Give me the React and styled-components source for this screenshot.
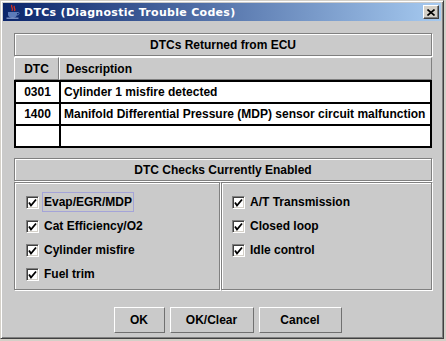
import React from 'react';
import styled, { createGlobalStyle } from 'styled-components';

const GlobalStyle = createGlobalStyle`
  html, body {
    margin: 0;
    padding: 0;
    background: #d4d0c8;
  }
  body {
    font-family: "Liberation Sans", Arial, sans-serif;
    font-size: 12px;
    font-weight: bold;
    color: #000;
  }
`;

const Window = styled.div`
  width: 444px;
  height: 339px;
  box-sizing: border-box;
  border: 1px solid;
  border-color: #d4d0c8 #404040 #404040 #d4d0c8;
  box-shadow: inset 1px 1px #fff, inset -1px -1px #808080;
  padding: 2px;
  background: #cacaca;
  display: flex;
  flex-direction: column;
`;

const TitleBar = styled.div`
  height: 18px;
  flex-shrink: 0;
  display: flex;
  align-items: center;
  padding: 0 2px 0 2px;
  background: linear-gradient(to right, #0a246a, #a6caf0);
  color: #fff;
`;

const TitleText = styled.span`
  flex: 1;
  margin-left: 3px;
  font-family: "DejaVu Sans", Verdana, sans-serif;
  font-size: 11px;
  font-weight: bold;
  letter-spacing: 0.3px;
  white-space: nowrap;
`;

const CloseButton = styled.div`
  width: 16px;
  height: 14px;
  box-sizing: border-box;
  background: #d4d0c8;
  border: 1px solid;
  border-color: #fff #404040 #404040 #fff;
  box-shadow: inset -1px -1px #808080;
  display: flex;
  align-items: center;
  justify-content: center;
`;

const Content = styled.div`
  flex: 1;
  display: flex;
  flex-direction: column;
  padding: 12px 9px 0 11px;
`;

const Group = styled.div`
  display: flex;
  flex-direction: column;
  margin-bottom: ${p => p.$gap || 0}px;
`;

const GroupTitle = styled.div`
  height: 23px;
  box-sizing: border-box;
  border: 1px solid #808080;
  box-shadow: inset 1px 1px #fff, 1px 1px #fff;
  display: flex;
  align-items: center;
  justify-content: center;
  margin-bottom: 1px;
`;

const HeaderRow = styled.div`
  display: grid;
  grid-template-columns: 45px 1fr;
  height: 23px;
`;

const HeaderCell = styled.div`
  box-sizing: border-box;
  border: 1px solid;
  border-color: #fff #808080 #808080 #fff;
  display: flex;
  align-items: center;
  justify-content: ${p => (p.$center ? 'center' : 'flex-start')};
  padding-left: ${p => (p.$center ? 0 : 6)}px;
`;

const TableBody = styled.div`
  background: #000;
  display: flex;
  flex-direction: column;
  gap: 2px;
  padding: 2px;
`;

const BodyRow = styled.div`
  display: grid;
  grid-template-columns: 43px 1fr;
  column-gap: 2px;
  height: 20px;
`;

const Cell = styled.div`
  background: #fff;
  display: flex;
  align-items: center;
  justify-content: ${p => (p.$center ? 'center' : 'flex-start')};
  padding-left: ${p => (p.$center ? 0 : 3)}px;
  white-space: nowrap;
`;

const ChecksGrid = styled.div`
  display: grid;
  grid-template-columns: 206px 1fr;
  column-gap: 1px;
  height: 108px;
`;

const ChecksBox = styled.div`
  box-sizing: border-box;
  border: 1px solid #808080;
  box-shadow: inset 1px 1px #fff, 1px 1px #fff;
  padding: 7px 0 0 ${p => p.$inset}px;
  display: flex;
  flex-direction: column;
`;

const CheckRow = styled.div`
  height: 24px;
  display: flex;
  align-items: center;
`;

const Box = styled.div`
  width: 13px;
  height: 13px;
  box-sizing: border-box;
  background: #fff;
  border: 1px solid;
  border-color: #808080 #fff #fff #808080;
  box-shadow: inset 1px 1px #404040, inset -1px -1px #d4d0c8;
  display: flex;
  align-items: center;
  justify-content: center;
  margin-right: 3px;
`;

const Label = styled.span`
  border: 1px solid ${p => (p.$focused ? '#a4a4d8' : 'transparent')};
  padding: 2px 1px;
  white-space: nowrap;
`;

const ButtonRow = styled.div`
  display: flex;
  justify-content: center;
  gap: 5px;
  padding-left: 9px;
  margin-top: 17px;
`;

const Button = styled.div`
  width: ${p => p.$w}px;
  height: 26px;
  box-sizing: border-box;
  border: 1px solid;
  border-color: #fff #707070 #707070 #fff;
  display: flex;
  align-items: center;
  justify-content: center;
`;

function JavaIcon() {
  return (
    <svg width="16" height="16" viewBox="0 0 16 16">
      <path d="M7 1c-2 2 2 3 0 6M9.5 2c-1.5 1.5 1.5 2.5 0 5" stroke="#d83020" strokeWidth="1.3" fill="none" />
      <path d="M3 8h9v2.5c0 2-2 3.5-4.5 3.5S3 12.5 3 10.5z" fill="#5c7ab8" />
      <path d="M12 8.5h1.5c1 0 1 2.5-1.5 2.5" stroke="#5c7ab8" strokeWidth="1" fill="none" />
      <path d="M1.5 14.2h12" stroke="#8ea4d4" strokeWidth="1.2" />
    </svg>
  );
}

function CheckMark() {
  return (
    <svg width="9" height="9" viewBox="0 0 9 9">
      <path d="M1 4.5l2 3 5-6" stroke="#000" strokeWidth="1.8" fill="none" />
    </svg>
  );
}

function Check({ label, focused }) {
  return (
    <CheckRow>
      <Box>
        <CheckMark />
      </Box>
      <Label $focused={focused}>{label}</Label>
    </CheckRow>
  );
}

const rows = [
  ['0301', 'Cylinder 1 misfire detected'],
  ['1400', 'Manifold Differential Pressure (MDP) sensor circuit malfunction'],
  ['', ''],
];

export default function App() {
  return (
    <>
      <GlobalStyle />
      <Window>
        <TitleBar>
          <JavaIcon />
          <TitleText>DTCs (Diagnostic Trouble Codes)</TitleText>
          <CloseButton>
            <svg width="8" height="7" viewBox="0 0 8 7">
              <path d="M0.5 0.5l7 6M7.5 0.5l-7 6" stroke="#000" strokeWidth="1.6" />
            </svg>
          </CloseButton>
        </TitleBar>
        <Content>
          <Group $gap={10}>
            <GroupTitle>DTCs Returned from ECU</GroupTitle>
            <HeaderRow>
              <HeaderCell $center>DTC</HeaderCell>
              <HeaderCell>Description</HeaderCell>
            </HeaderRow>
            <TableBody>
              {rows.map((r, i) => (
                <BodyRow key={i}>
                  <Cell $center>{r[0]}</Cell>
                  <Cell>{r[1]}</Cell>
                </BodyRow>
              ))}
            </TableBody>
          </Group>
          <Group>
            <GroupTitle>DTC Checks Currently Enabled</GroupTitle>
            <ChecksGrid>
              <ChecksBox $inset={11}>
                <Check label="Evap/EGR/MDP" focused />
                <Check label="Cat Efficiency/O2" />
                <Check label="Cylinder misfire" />
                <Check label="Fuel trim" />
              </ChecksBox>
              <ChecksBox $inset={10}>
                <Check label="A/T Transmission" />
                <Check label="Closed loop" />
                <Check label="Idle control" />
              </ChecksBox>
            </ChecksGrid>
          </Group>
          <ButtonRow>
            <Button $w={51}>OK</Button>
            <Button $w={84}>OK/Clear</Button>
            <Button $w={83}>Cancel</Button>
          </ButtonRow>
        </Content>
      </Window>
    </>
  );
}
